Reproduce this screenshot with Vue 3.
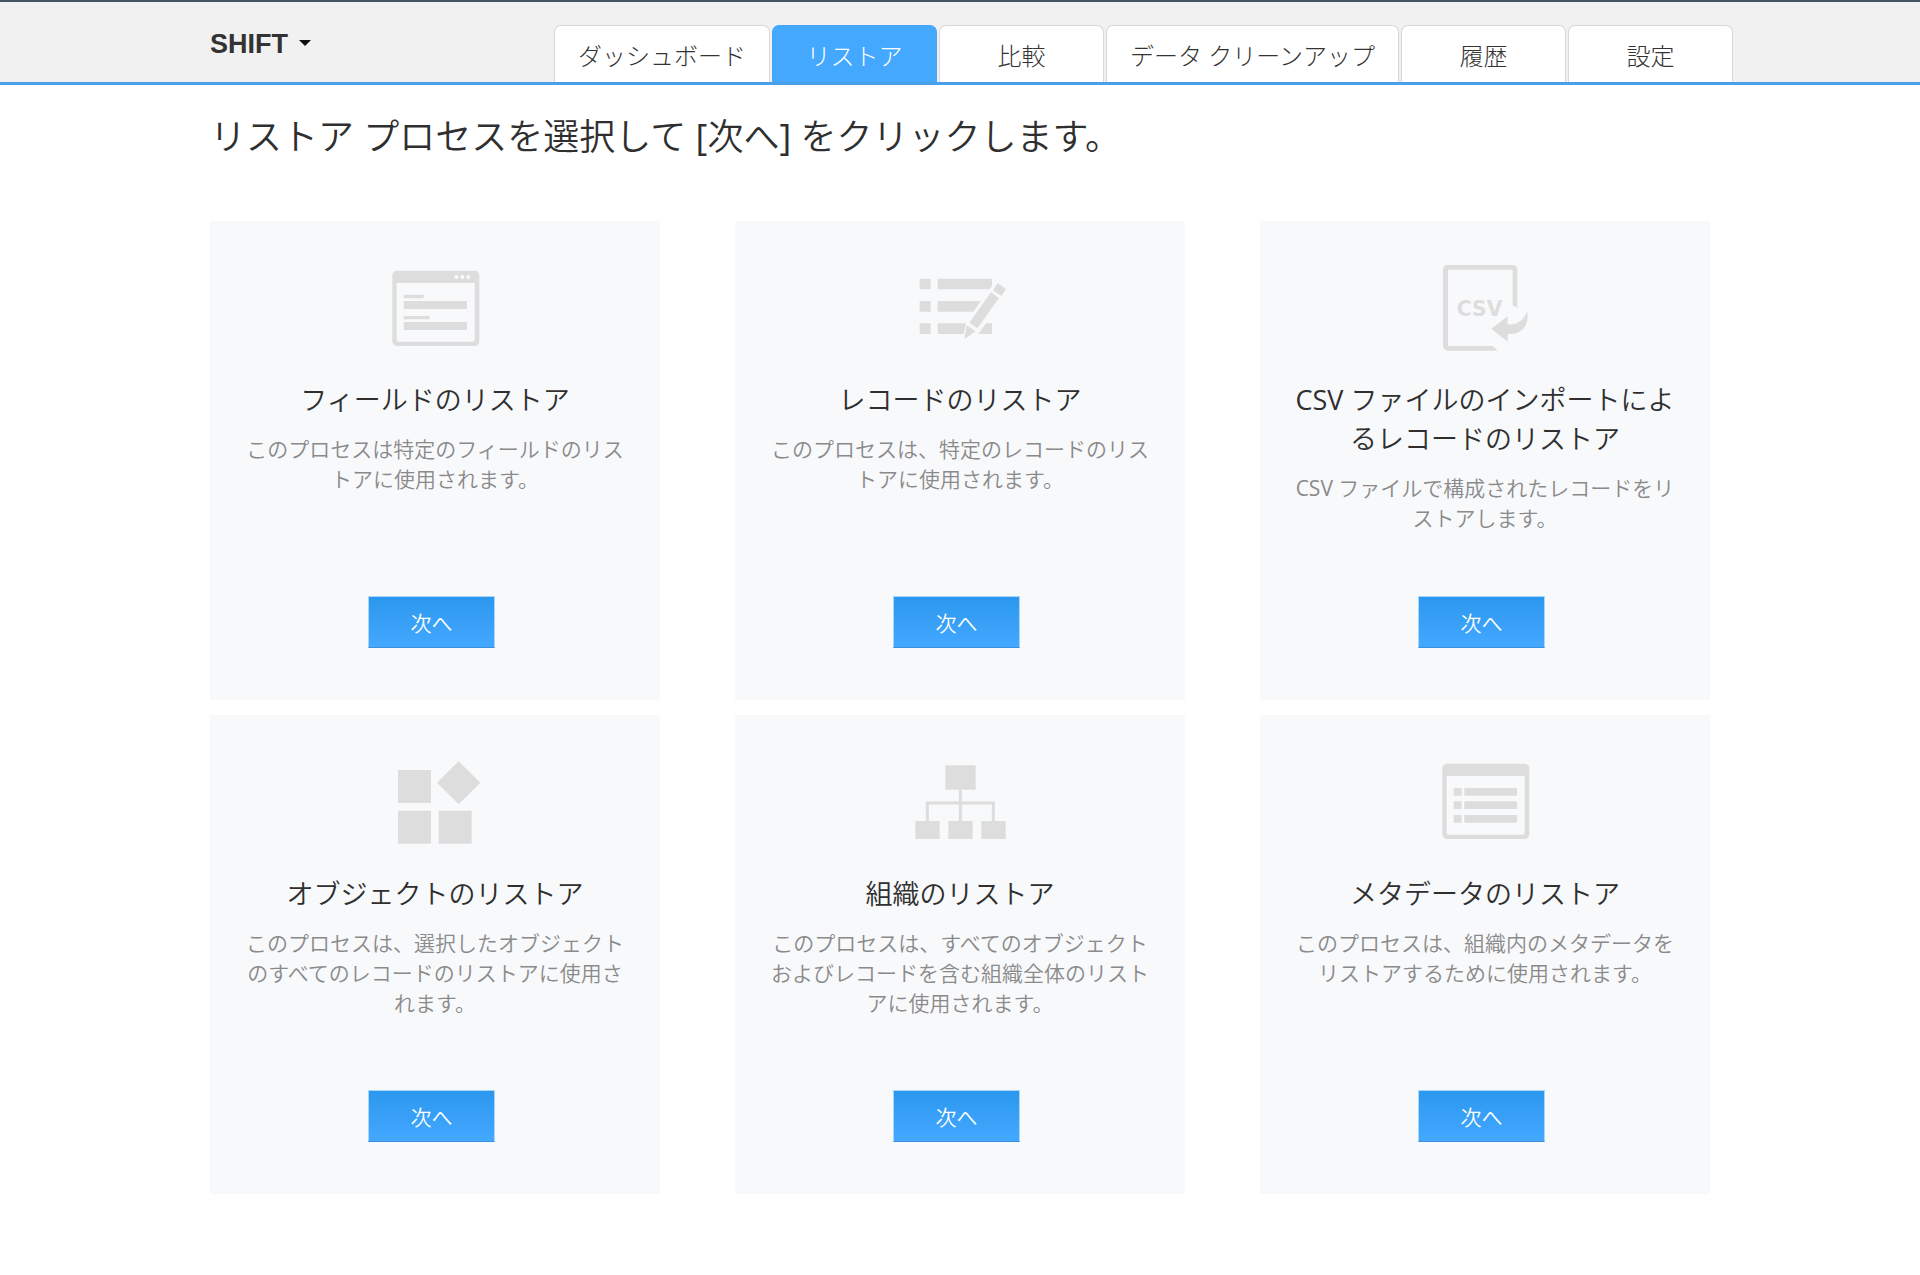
<script setup>
import { ref } from 'vue'

const tabs = ['ダッシュボード', 'リストア', '比較', 'データ クリーンアップ', '履歴', '設定']
const activeTab = ref('リストア')

const cards = [
  {
    icon: 'field',
    viewBox: '21 3 288 288',
    title: 'フィールドのリストア',
    text: 'このプロセスは特定のフィールドのリストアに使用されます。'
  },
  {
    icon: 'record',
    viewBox: '21 3 288 288',
    title: 'レコードのリストア',
    text: 'このプロセスは、特定のレコードのリストアに使用されます。'
  },
  {
    icon: 'csv',
    viewBox: '21 18 288 288',
    title: 'CSV ファイルのインポートによるレコードのリストア',
    text: 'CSV ファイルで構成されたレコードをリストアします。'
  },
  {
    icon: 'object',
    viewBox: '6 15 288 288',
    title: 'オブジェクトのリストア',
    text: 'このプロセスは、選択したオブジェクトのすべてのレコードのリストアに使用されます。'
  },
  {
    icon: 'org',
    viewBox: '21 15 288 288',
    title: '組織のリストア',
    text: 'このプロセスは、すべてのオブジェクトおよびレコードを含む組織全体のリストアに使用されます。'
  },
  {
    icon: 'metadata',
    viewBox: '21 15 288 288',
    title: 'メタデータのリストア',
    text: 'このプロセスは、組織内のメタデータをリストアするために使用されます。'
  }
]
</script>

<template>
  <div class="page" lang="ja">
    <header class="header">
      <div class="container header-inner">
        <button type="button" class="org-menu">
          SHIFT
          <svg class="caret" viewBox="0 0 12 6" aria-hidden="true"><path d="M0 0h12L6 6z" /></svg>
        </button>
        <nav class="tabs">
          <a
            v-for="tab in tabs"
            :key="tab"
            href="#"
            class="tab"
            :class="{ active: tab === activeTab }"
            @click.prevent="activeTab = tab"
          >{{ tab }}</a>
        </nav>
      </div>
    </header>

    <main class="container">
      <h1 class="heading">リストア プロセスを選択して [次へ] をクリックします。</h1>

      <div class="cards">
        <section v-for="card in cards" :key="card.icon" class="card">
          <svg class="icon" :viewBox="card.viewBox" aria-hidden="true">
            <template v-if="card.icon === 'field'">
              <path
                fill-rule="evenodd"
                d="M51 32H284a14 14 0 0 1 14 14V244a14 14 0 0 1-14 14H51a14 14 0 0 1-14-14V46a14 14 0 0 1 14-14zM50 69V239a6 6 0 0 0 6 6H278a6 6 0 0 0 6-6V69z"
              />
              <circle class="hole" cx="229" cy="51" r="6" />
              <circle class="hole" cx="247" cy="51" r="6" />
              <circle class="hole" cx="265" cy="51" r="6" />
              <path d="M71 104h60v11h-60zM71 123h190v24h-190zM71 168h78v10h-78zM71 186h190v24h-190z" />
            </template>
            <template v-else-if="card.icon === 'record'">
              <path d="M44 56h33v32h-33zM44 123h33v32h-33zM44 190h33v32h-33z" />
              <path d="M98 56H261V78L254 88H98zM98 123H228L205 155H98zM98 190H183L176 222H98zM220 222L243 190H261V222z" />
              <path d="M258 97L282 114L217 205L193 188zM278 69L303 87L289 108L264 91zM185 196L212 214L178 238z" />
            </template>
            <template v-else-if="card.icon === 'csv'">
              <path
                d="M53 30H248a14 14 0 0 1 14 14V158L248 151V44H54V273H188L203 287H53a14 14 0 0 1-14-14V44a14 14 0 0 1 14-14z"
              />
              <text class="csv-label" x="149" y="182" text-anchor="middle">CSV</text>
              <path d="M184 221L233 184V208C262 211 283 196 291 168C300 209 276 239 233 237V260z" />
            </template>
            <template v-else-if="card.icon === 'object'">
              <path d="M39 60h99v99h-99zM39 182h99v99h-99zM161 182h99v99h-99zM221 34L286 98L221 163L156 98z" />
            </template>
            <template v-else-if="card.icon === 'org'">
              <path d="M121 46h91v73h-91zM31 213h73v54h-73zM130 213h73v54h-73zM229 213h73v54h-73z" />
              <path class="link" d="M166 119V213M67 213V159H265V213" />
            </template>
            <template v-else>
              <path
                fill-rule="evenodd"
                d="M51 41H284a14 14 0 0 1 14 14V253a14 14 0 0 1-14 14H51a14 14 0 0 1-14-14V55a14 14 0 0 1 14-14zM50 78V248a6 6 0 0 0 6 6H278a6 6 0 0 0 6-6V78z"
              />
              <path d="M71 114h24v23h-24zM103 114h158v23h-158zM71 154h24v23h-24zM103 154h158v23h-158zM71 195h24v23h-24zM103 195h158v23h-158z" />
            </template>
          </svg>
          <h2 class="title">{{ card.title }}</h2>
          <p class="text">{{ card.text }}</p>
          <div class="action">
            <button type="button" class="next">次へ</button>
          </div>
        </section>
      </div>
    </main>
  </div>
</template>

<style>
body {
  background: #fff;
}
</style>

<style scoped>
.page {
  font-family: 'Open Sans', 'Noto Sans CJK JP DemiLight', 'Noto Sans CJK JP', sans-serif;
  font-weight: 400;
  color: #2f2f2f;
  padding-bottom: 48px;
}

.container {
  box-sizing: border-box;
  width: calc(100% - 48px);
  max-width: 1500px;
  margin: 0 auto;
}

.header {
  background: #f1f1f1;
  border-top: 2px solid #445463;
  border-bottom: 3px solid #4a9fea;
}

.header-inner {
  display: flex;
  justify-content: space-between;
  align-items: flex-end;
  min-height: 80px;
}

.org-menu {
  display: flex;
  align-items: center;
  gap: 11px;
  align-self: center;
  padding: 3px 0 0;
  border: 0;
  background: none;
  color: #333;
  font: 700 27px/32px 'Liberation Sans', Arial, sans-serif;
  cursor: pointer;
}

.caret {
  width: 12px;
  height: 6px;
  margin-bottom: 2px;
  fill: #111;
}

.tabs {
  display: flex;
  gap: 2px;
  margin-right: -23px;
}

.tab {
  box-sizing: border-box;
  min-width: 165px;
  height: 57px;
  padding: 12px 23px 0;
  border: 1px solid #d8d8d8;
  border-bottom: 0;
  border-radius: 7px 7px 0 0;
  background: #fff;
  color: #333;
  font-family: 'Open Sans', 'Noto Sans CJK JP', sans-serif;
  font-size: 24px;
  font-weight: 300;
  line-height: 36px;
  text-align: center;
  text-decoration: none;
  white-space: nowrap;
}

.tab.active {
  border-color: #44a8ff;
  background: #44a8ff;
  color: #fff;
}

.heading {
  margin: 24px 0 56px;
  font-size: 36px;
  line-height: 56px;
  font-weight: 400;
}

.cards {
  display: grid;
  grid-template-columns: repeat(3, 1fr);
  gap: 15px 75px;
}

.card {
  box-sizing: border-box;
  display: flex;
  flex-direction: column;
  align-items: center;
  min-height: 479px;
  padding: 40px 30px 52px;
  background: #f8f9fb;
  text-align: center;
}

.icon {
  width: 96px;
  height: 96px;
  fill: #ddd;
}

.hole {
  fill: #f8f9fb;
}

.link {
  fill: none;
  stroke: #ddd;
  stroke-width: 9px;
}

.csv-label {
  font: 700 61px 'DejaVu Sans', sans-serif;
}

.title {
  margin: 23px 0 15px;
  font-size: 27px;
  line-height: 39px;
  font-weight: 400;
}

.text {
  margin: 0;
  color: #8a8a8a;
  font-size: 21px;
  line-height: 30px;
}

.action {
  margin-top: auto;
  padding-right: 7px;
}

.next {
  box-sizing: border-box;
  width: 127px;
  height: 52px;
  padding: 1px 0 0;
  border: 1px solid #a9d6fb;
  border-bottom-color: #3a90dc;
  background: linear-gradient(#2c97ee, #44a8ff);
  color: #fff;
  font: inherit;
  font-size: 21px;
  line-height: 30px;
  cursor: pointer;
}
</style>
